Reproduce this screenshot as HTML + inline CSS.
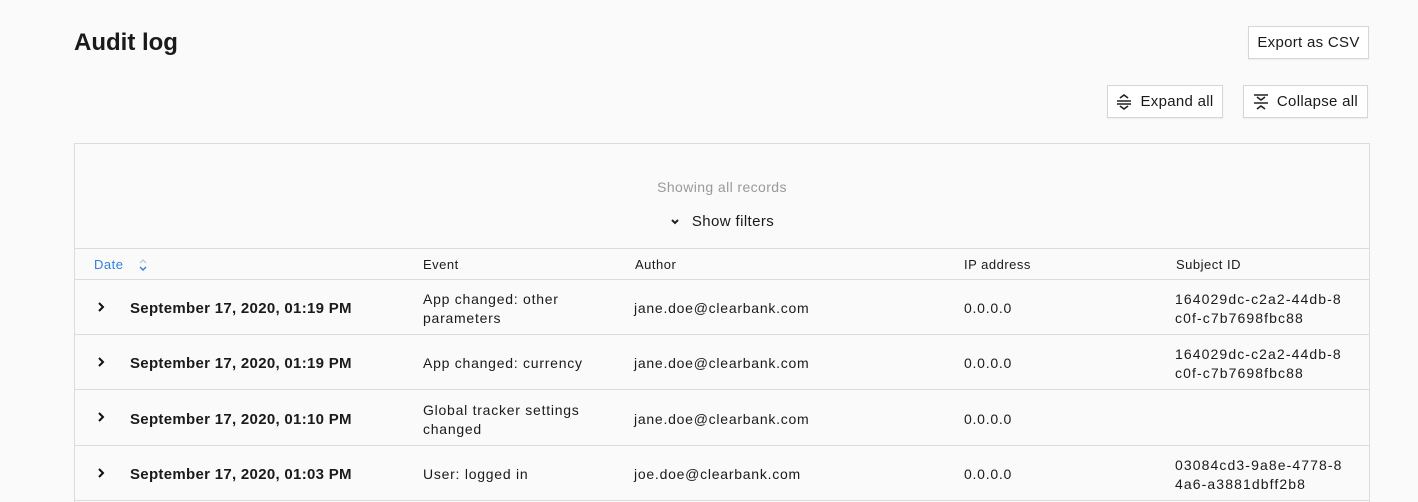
<!DOCTYPE html>
<html><head><style>
*{box-sizing:border-box;margin:0;padding:0}
html,body{width:1418px;height:502px;overflow:hidden}
body{background:#fafafa;font-family:"Liberation Sans",sans-serif;color:#1a1a1a;position:relative}
.abs{position:absolute}
h1{position:absolute;left:74px;top:29px;font-size:24px;font-weight:bold}
.btn{position:absolute;height:33px;border:1px solid #d6d6d6;background:#fff;font-size:15px;letter-spacing:.3px;display:flex;align-items:center;justify-content:center;gap:8px;box-shadow:0 1px 1px rgba(0,0,0,.06)}
.table{position:absolute;left:74px;top:143px;width:1296px;height:359px;border:1px solid #dcdcdc;border-bottom:none;background:#fafafa;overflow:hidden}
.row{position:absolute;left:0;width:100%;border-top:1px solid #dcdcdc}
.c{position:absolute;font-size:14px;line-height:19px;letter-spacing:.75px}
.h{font-size:13px;letter-spacing:.5px}
.d{font-weight:bold;font-size:15px;letter-spacing:.3px}
</style></head><body>
<h1>Audit log</h1>
<div class="btn" style="left:1248px;top:26px;width:121px">Export as CSV</div>
<div class="btn" style="left:1107px;top:85px;width:116px"><svg width="16" height="18" viewBox="0 0 16 18" fill="none" stroke="#222" stroke-width="1.6"><path d="M4 5l4-3 4 3M1 8h14M1 11h14M4 13l4 3 4-3"/></svg>Expand all</div>
<div class="btn" style="left:1243px;top:85px;width:125px"><svg width="16" height="18" viewBox="0 0 16 18" fill="none" stroke="#222" stroke-width="1.6"><path d="M1 2h14M4 4l4 3 4-3M1 10h14M4 16l4-3 4 3"/></svg>Collapse all</div>
<div class="table">
<div class="abs" style="left:0;width:100%;top:35px;text-align:center;font-size:14px;letter-spacing:.4px;color:#999">Showing all records</div>
<div class="abs" style="left:0;width:100%;top:69px;text-align:center;font-size:15px;letter-spacing:.4px"><svg width="10" height="8" viewBox="0 0 10 8" style="margin-right:12px" fill="none" stroke="#222" stroke-width="2"><path d="M2 2l3 3 3-3"/></svg>Show filters</div>
<div class="row" style="top:104px;height:31px">
<div class="c h" style="left:19px;top:6px;color:#2f7fe0">Date <svg width="10" height="14" viewBox="0 0 10 14" style="margin-left:10px;vertical-align:-3px" fill="none" stroke-width="1.4"><path d="M2 5l3-3 3 3" stroke="#bcd"/><path d="M2 9l3 3 3-3" stroke="#2f7fe0"/></svg></div>
<div class="c h" style="left:348px;top:6px">Event</div>
<div class="c h" style="left:560px;top:6px">Author</div>
<div class="c h" style="left:889px;top:6px">IP address</div>
<div class="c h" style="left:1101px;top:6px">Subject ID</div>
</div>
<div class="row" style="top:135px;height:55px">
<div class="c" style="left:22px;top:18px"><svg width="8" height="10" viewBox="0 0 8 10" fill="none" stroke="#111" stroke-width="2"><path d="M2 1l4 4-4 4"/></svg></div>
<div class="c d" style="left:55px;top:19px">September 17, 2020, 01:19 PM</div>
<div class="c" style="left:348px;top:10px">App changed: other<br>parameters</div>
<div class="c" style="left:559px;top:19px">jane.doe@clearbank.com</div>
<div class="c" style="left:889px;top:19px">0.0.0.0</div>
<div class="c" style="left:1100px;top:10px;letter-spacing:1.1px">164029dc-c2a2-44db-8<br>c0f-c7b7698fbc88</div>
</div>
<div class="row" style="top:190px;height:55px">
<div class="c" style="left:22px;top:18px"><svg width="8" height="10" viewBox="0 0 8 10" fill="none" stroke="#111" stroke-width="2"><path d="M2 1l4 4-4 4"/></svg></div>
<div class="c d" style="left:55px;top:19px">September 17, 2020, 01:19 PM</div>
<div class="c" style="left:348px;top:19px">App changed: currency</div>
<div class="c" style="left:559px;top:19px">jane.doe@clearbank.com</div>
<div class="c" style="left:889px;top:19px">0.0.0.0</div>
<div class="c" style="left:1100px;top:10px;letter-spacing:1.1px">164029dc-c2a2-44db-8<br>c0f-c7b7698fbc88</div>
</div>
<div class="row" style="top:245px;height:56px">
<div class="c" style="left:22px;top:18px"><svg width="8" height="10" viewBox="0 0 8 10" fill="none" stroke="#111" stroke-width="2"><path d="M2 1l4 4-4 4"/></svg></div>
<div class="c d" style="left:55px;top:20px">September 17, 2020, 01:10 PM</div>
<div class="c" style="left:348px;top:11px">Global tracker settings<br>changed</div>
<div class="c" style="left:559px;top:20px">jane.doe@clearbank.com</div>
<div class="c" style="left:889px;top:20px">0.0.0.0</div>
</div>
<div class="row" style="top:301px;height:55px">
<div class="c" style="left:22px;top:18px"><svg width="8" height="10" viewBox="0 0 8 10" fill="none" stroke="#111" stroke-width="2"><path d="M2 1l4 4-4 4"/></svg></div>
<div class="c d" style="left:55px;top:19px">September 17, 2020, 01:03 PM</div>
<div class="c" style="left:348px;top:19px">User: logged in</div>
<div class="c" style="left:559px;top:19px">joe.doe@clearbank.com</div>
<div class="c" style="left:889px;top:19px">0.0.0.0</div>
<div class="c" style="left:1100px;top:10px;letter-spacing:1.1px">03084cd3-9a8e-4778-8<br>4a6-a3881dbff2b8</div>
</div>
<div class="row" style="top:356px;height:1px"></div>
</div>
</body></html>
